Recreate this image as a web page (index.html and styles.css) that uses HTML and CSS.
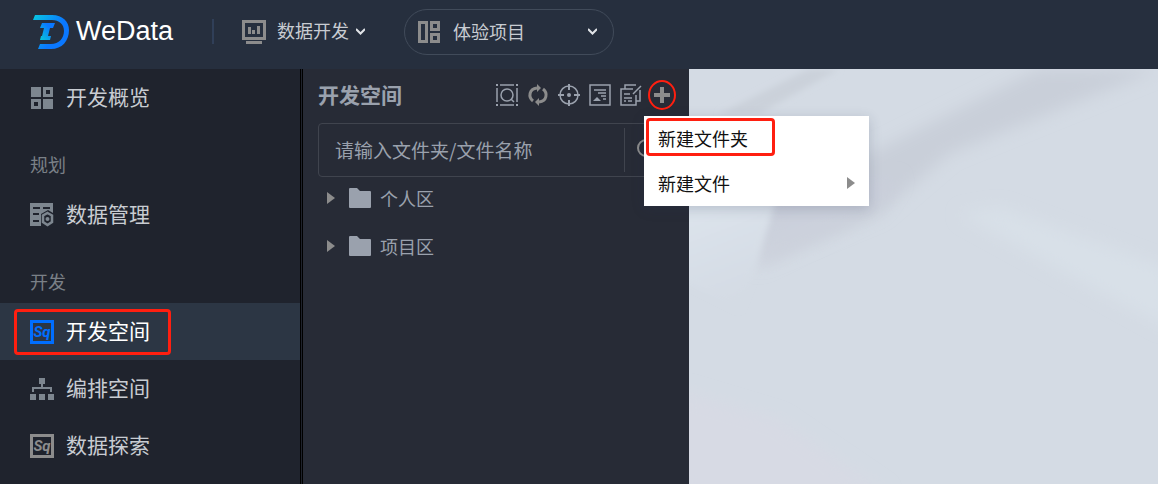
FILE: index.html
```html
<!DOCTYPE html>
<html lang="zh-CN">
<head>
    <meta charset="UTF-8">
    <meta name="viewport" content="width=device-width, initial-scale=1.0">
    <title>WeData</title>
    <link rel="stylesheet" href="styles.css">
</head>
<body>
    <header class="topbar">
        <a class="logo" href="#">
            <svg width="36" height="34" viewBox="0 0 36 34">
                <defs>
                    <linearGradient id="logoOuter" x1="0" y1="0" x2="1" y2="0.6">
                        <stop offset="0" stop-color="#08c8e0"/>
                        <stop offset="0.7" stop-color="#0a78ff"/>
                    </linearGradient>
                    <linearGradient id="logoInner" x1="0" y1="1" x2="1" y2="0">
                        <stop offset="0" stop-color="#08c8d8"/>
                        <stop offset="0.7" stop-color="#0a78ff"/>
                    </linearGradient>
                </defs>
                <path fill="url(#logoOuter)" d="M2 0H19C30 0 36 7 36 15C36 26 29 34 18 34H5L7 29H18C26 29 31 23 31 16C31 9 26 5 19 5H0Z"/>
                <path fill="url(#logoInner)" d="M9 8H22L20 13H17L14 25H7L8 21H9L11 13H7ZM15 21H18L17 25H14Z"/>
            </svg>
            <span>WeData</span>
        </a>
        <span class="topbar-line"></span>
        <button class="module-btn" type="button">
            <svg width="24" height="24" viewBox="0 0 24 24" fill="#8c8c8c">
                <path fill-rule="evenodd" d="M0 0H24V20H0ZM3 3V17H21V3Z"/>
                <path d="M6 7H9V14H6ZM10 10H13V14H10ZM15 6H18V14H15ZM4 21H20V24H4Z"/>
            </svg>
            <span>数据开发</span>
            <svg width="9" height="7" viewBox="0 0 9 7" fill="none" stroke="#e0e3e7" stroke-width="2"><path d="M0 1L4.500 5.500L9 1"/></svg>
        </button>
        <div class="project">
            <svg width="22" height="22" viewBox="0 0 22 22" fill="#8c8c8c">
                <path fill-rule="evenodd" d="M0 0H10V22H0ZM3 3V19H7V3ZM12 0H22V10H12ZM15 3V7H19V3ZM12 12H22V22H12ZM15 15V19H19V15Z"/>
            </svg>
            <select class="project-select" aria-label="项目">
                <option>体验项目</option>
            </select>
            <svg class="project-arrow" width="9" height="7" viewBox="0 0 9 7" fill="none" stroke="#e0e3e7" stroke-width="2"><path d="M0 1L4.500 5.500L9 1"/></svg>
        </div>
    </header>

    <div class="layout">
        <nav class="sidebar">
            <a class="nav-item" href="#">
                <svg width="24" height="24" viewBox="0 0 24 24" fill="#7d868f">
                    <path fill-rule="evenodd" d="M1 1H11V11H1ZM13 13H23V23H13ZM13 1H23V11H13ZM16 4V8H20V4ZM1 13H11V23H1ZM4 16V20H8V16Z"/>
                </svg>
                <span>开发概览</span>
            </a>
            <div class="nav-label">规划</div>
            <a class="nav-item" href="#">
                <svg width="24" height="24" viewBox="0 0 24 24">
                    <path fill="#7d868f" fill-rule="evenodd" d="M0 0H23V10L18 7L11 11V23H0ZM3 4V6H10V4ZM13 4V6H20V4ZM3 10V12H9V10ZM3 17V19H9V17Z"/>
                    <path fill="none" stroke="#7d868f" stroke-width="2.500" d="M17.500 10L22 12.500V19L17.500 22L13 19V12.500Z"/>
                    <circle cx="17.500" cy="16" r="2" fill="#7d868f"/>
                </svg>
                <span>数据管理</span>
            </a>
            <div class="nav-label">开发</div>
            <a class="nav-item active marked" href="#">
                <svg width="24" height="24" viewBox="0 0 24 24">
                    <rect x="1.500" y="1.500" width="21" height="21" fill="none" stroke="#006eff" stroke-width="3"/>
                    <text class="sq" x="12" y="17" fill="#006eff" text-anchor="middle">Sq</text>
                </svg>
                <span>开发空间</span>
            </a>
            <a class="nav-item" href="#">
                <svg width="24" height="24" viewBox="0 0 24 24" fill="#7d868f">
                    <path d="M9 1H15V7H9ZM0 17H6V23H0ZM9 17H15V23H9ZM18 17H24V23H18ZM11 7H13V10H22V15H20V12H4V15H2V10H11Z"/>
                </svg>
                <span>编排空间</span>
            </a>
            <a class="nav-item" href="#">
                <svg width="24" height="24" viewBox="0 0 24 24">
                    <rect x="1.500" y="1.500" width="21" height="21" fill="none" stroke="#8c8c8c" stroke-width="3"/>
                    <text class="sq" x="12" y="17" fill="#8c8c8c" text-anchor="middle">Sq</text>
                </svg>
                <span>数据探索</span>
            </a>
        </nav>

        <section class="panel">
            <div class="panel-head">
                <h2>开发空间</h2>
                <div class="tools">
                    <button type="button" aria-label="查找">
                        <svg width="22" height="22" viewBox="0 0 22 22" fill="none" stroke="#9aa1ad" stroke-width="1.500">
                            <path d="M4 1H18M4 21H18M1 4V18M21 4V18"/>
                            <path fill="#9aa1ad" stroke="none" d="M0 0H2V2H0ZM20 0H22V2H20ZM0 20H2V22H0ZM20 20H22V22H20Z"/>
                            <circle cx="11" cy="11" r="6"/><path d="M15 15L18 18"/>
                        </svg>
                    </button>
                    <button type="button" aria-label="刷新">
                        <svg width="22" height="22" viewBox="0 0 22 22" fill="none" stroke="#8c8c8c" stroke-width="3">
                            <path d="M6 17C1 13 2 5 10 4M16 5C21 9 20 17 12 18"/>
                            <path fill="#8c8c8c" stroke="none" d="M10 0L14 4L10 8ZM12 14L8 18L12 22Z"/>
                        </svg>
                    </button>
                    <button type="button" aria-label="定位">
                        <svg width="22" height="22" viewBox="0 0 22 22" fill="none" stroke="#9aa1ad" stroke-width="1.500">
                            <circle cx="11" cy="11" r="9"/>
                            <path stroke-width="2" d="M11 0V6M11 16V22M0 11H6M16 11H22"/>
                            <circle cx="11" cy="11" r="2" fill="#9aa1ad" stroke="none"/>
                        </svg>
                    </button>
                    <button type="button" aria-label="折叠">
                        <svg width="22" height="22" viewBox="0 0 22 22" fill="none" stroke="#9aa1ad" stroke-width="1.500">
                            <path d="M1 1H21V21H1ZM5 6H17M9 9H17M12 12H17M14 15H17"/>
                            <path fill="#9aa1ad" stroke="none" d="M4 17L8 13L12 17Z"/>
                        </svg>
                    </button>
                    <button type="button" aria-label="批量编辑">
                        <svg width="22" height="22" viewBox="0 0 22 22" fill="none" stroke="#9aa1ad" stroke-width="1.500">
                            <path d="M13 5H1V21H16V11M5 5V1H16M20 6V17H16M4 10H10M4 14H12M4 17H6M8 17H12M13 10L21 2"/>
                        </svg>
                    </button>
                    <div class="add-wrap">
                        <button class="add-btn" type="button" aria-label="新建">
                            <svg width="22" height="22" viewBox="0 0 22 22" fill="#8c8c8c"><path d="M9 3H13V9H19V13H13V19H9V13H3V9H9Z"/></svg>
                        </button>
                        <div class="menu">
                            <button class="menu-item marked" type="button">新建文件夹</button>
                            <button class="menu-item" type="button">新建文件
                                <svg width="8" height="12" viewBox="0 0 8 12" fill="#8c8c8c"><path d="M0 0L8 6L0 12Z"/></svg>
                            </button>
                        </div>
                    </div>
                </div>
            </div>

            <div class="search">
                <input type="text" placeholder="请输入文件夹/文件名称" aria-label="请输入文件夹/文件名称">
                <button class="search-btn" type="button" aria-label="搜索">
                    <svg width="22" height="22" viewBox="0 0 22 22" fill="none" stroke="#8c8c8c" stroke-width="2"><circle cx="9" cy="9" r="8"/><path d="M15 15L21 21"/></svg>
                </button>
            </div>

            <ul class="tree">
                <li>
                    <svg width="8" height="12" viewBox="0 0 8 12" fill="#8c8c8c"><path d="M0 0L8 6L0 12Z"/></svg>
                    <svg class="folder" width="22" height="20" viewBox="0 0 22 20" fill="#9aa1ad"><path d="M1 0H8L11 3H21Q22 3 22 4V19Q22 20 21 20H1Q0 20 0 19V1Q0 0 1 0Z"/></svg>
                    <span>个人区</span>
                </li>
                <li>
                    <svg width="8" height="12" viewBox="0 0 8 12" fill="#8c8c8c"><path d="M0 0L8 6L0 12Z"/></svg>
                    <svg class="folder" width="22" height="20" viewBox="0 0 22 20" fill="#9aa1ad"><path d="M1 0H8L11 3H21Q22 3 22 4V19Q22 20 21 20H1Q0 20 0 19V1Q0 0 1 0Z"/></svg>
                    <span>项目区</span>
                </li>
            </ul>
        </section>

        <main class="content">
            <!-- folded paper backdrop -->
            <svg class="backdrop" viewBox="0 0 469 415" preserveAspectRatio="none">
                <defs>
                    <filter id="soft" x="-20%" y="-20%" width="140%" height="140%"><feGaussianBlur stdDeviation="8"/></filter>
                    <filter id="edge" x="-20%" y="-20%" width="140%" height="140%"><feGaussianBlur stdDeviation="3"/></filter>
                    <linearGradient id="fold" x1="0" y1="0" x2="0.4" y2="1">
                        <stop offset="0" stop-color="#c6cbd8"/>
                        <stop offset="1" stop-color="#d0d5df"/>
                    </linearGradient>
                    <linearGradient id="sheet" x1="0" y1="0" x2="0.3" y2="1">
                        <stop offset="0" stop-color="#dee6ee"/>
                        <stop offset="1" stop-color="#d4dbe4"/>
                    </linearGradient>
                </defs>
                <rect width="469" height="415" fill="#d4dbe4"/>
                <path filter="url(#soft)" fill="#c9cfd9" d="M350 0H470L260 85L190 145L68 195L90 125L190 80Z"/>
                <path filter="url(#edge)" fill="#cbd1da" d="M30 45L120 0H150L70 45Z"/>
                <path filter="url(#soft)" fill="url(#fold)" d="M92 110H210L190 140L66 200Z"/>
                <path filter="url(#edge)" fill="url(#sheet)" d="M-10 110H92L66 200L50 240L-10 210Z"/>
                <path filter="url(#soft)" fill="#d8e0e8" d="M270 145L310 138L480 200V260Z"/>
                <path filter="url(#soft)" fill="#d7dae4" d="M-10 320L90 350L200 425H-10Z"/>
            </svg>
        </main>
    </div>
</body>
</html>
```
FILE: styles.css
```css
*, *::after {
    box-sizing: border-box;
}

body {
    margin: 0;
    min-height: 100vh;
    display: flex;
    flex-direction: column;
    background-color: #1f232d;
    color: #c8ccd2;
    font-family: "Noto Sans CJK SC", sans-serif;
    font-size: 18px;
}

button {
    padding: 0;
    border: none;
    background: none;
    color: inherit;
    font: inherit;
    cursor: pointer;
}

svg {
    flex: none;
    display: block;
}

.topbar {
    height: 69px;
    padding: 0 33px 6px;
    display: flex;
    align-items: center;
    background-color: #262f3e;
}

.logo {
    display: flex;
    align-items: center;
    gap: 7px;
    color: #fff;
    font-family: "Liberation Sans", Arial, sans-serif;
    font-size: 27px;
    text-decoration: none;
}

.topbar-line {
    width: 2px;
    height: 25px;
    margin: 0 28px 0 39px;
    background-color: #303f58;
}

.module-btn {
    display: flex;
    align-items: center;
    gap: 11px;
}

.module-btn span {
    margin-right: -4px;
    padding-bottom: 3px;
}

.project {
    position: relative;
    width: 210px;
    height: 46px;
    margin-left: 39px;
    padding-left: 13px;
    display: flex;
    align-items: center;
    border: 1px solid #414b5a;
    border-radius: 23px;
}

.project-select {
    flex: 1;
    height: 100%;
    padding: 0 0 2px 13px;
    border: none;
    outline: none;
    appearance: none;
    background: none;
    color: inherit;
    font: inherit;
}

.project-arrow {
    position: absolute;
    right: 16px;
    pointer-events: none;
}

.layout {
    flex: 1;
    display: grid;
    grid-template-columns: 303px 386px 1fr;
}

.sidebar {
    border-right: 3px double #000;
}

.nav-item {
    position: relative;
    height: 57px;
    padding-left: 30px;
    display: flex;
    align-items: center;
    gap: 12px;
    color: inherit;
    font-size: 21px;
    text-decoration: none;
}

.nav-item span {
    padding-bottom: 4px;
}

.nav-item.active {
    background-color: #2c3644;
    color: #fff;
}

.nav-label {
    height: 60px;
    padding: 17px 0 0 30px;
    line-height: 42px;
    color: #7a8087;
}

.sq {
    font-family: Roboto, sans-serif;
    font-size: 15px;
    font-weight: bold;
    font-style: italic;
}

/* red highlight frames */
.marked::after {
    content: '';
    position: absolute;
    border: 3px solid #ff1f10;
    border-radius: 4px;
}

.nav-item.marked::after {
    top: 6px;
    left: 14px;
    width: 157px;
    height: 46px;
}

.panel {
    padding: 0 16px 0 15px;
    background-color: #272b36;
    color: #9aa1ad;
}

.panel-head {
    height: 54px;
    padding-bottom: 2px;
    display: flex;
    align-items: center;
    justify-content: space-between;
}

.panel-head h2 {
    margin: 0;
    padding-bottom: 2px;
    font-size: 21px;
}

.tools {
    display: flex;
    align-items: center;
    gap: 9px;
}

.add-wrap {
    position: relative;
}

.add-btn {
    display: block;
}

.add-btn::after {
    content: '';
    position: absolute;
    top: -4px;
    left: -3px;
    width: 28px;
    height: 30px;
    border: 2px solid #ff1f10;
    border-radius: 50%;
}

.menu {
    position: absolute;
    z-index: 10;
    top: 32px;
    left: -7px;
    width: 225px;
    background-color: #fff;
    box-shadow: 0 3px 12px rgba(40, 50, 80, 0.2);
}

.menu-item {
    position: relative;
    width: 100%;
    height: 45px;
    padding: 0 14px 2px;
    display: flex;
    align-items: center;
    justify-content: space-between;
    color: #111;
}

.menu-item.marked::after {
    top: 2px;
    left: 2px;
    width: 129px;
    height: 38px;
}

.search {
    height: 54px;
    display: flex;
    align-items: center;
    border: 1px solid #40444e;
    border-radius: 4px;
}

.search input {
    flex: 1;
    min-width: 0;
    height: 100%;
    padding: 0 16px 2px;
    border: none;
    outline: none;
    background: none;
    color: inherit;
    font: inherit;
    font-size: 19px;
}

.search input::placeholder {
    color: #9aa1ad;
}

.search-btn {
    height: 44px;
    padding: 0 13px 0 12px;
    border-left: 1px solid #40444e;
}

.tree {
    margin: 0;
    padding: 0 0 0 9px;
    display: flex;
    flex-direction: column;
    gap: 6px;
    list-style: none;
}

.tree li {
    height: 42px;
    display: flex;
    align-items: center;
}

.tree .folder {
    margin: 0 9px 0 14px;
}

.content {
    position: relative;
    background-color: #d4dbe4;
    overflow: hidden;
}

.backdrop {
    position: absolute;
    width: 100%;
    height: 100%;
}
```
